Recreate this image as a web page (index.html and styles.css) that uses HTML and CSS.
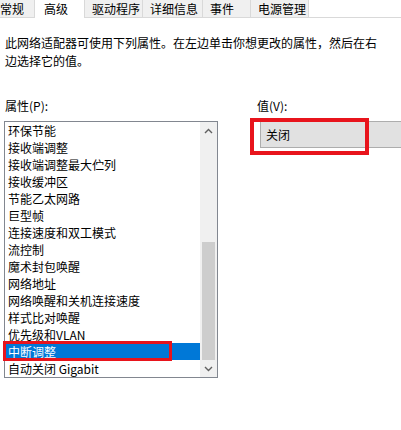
FILE: index.html
```html
<!DOCTYPE html>
<html lang="zh-CN">
<head>
  <meta charset="UTF-8">
  <meta name="viewport" content="width=device-width, initial-scale=1.0">
  <title>高级</title>
  <link rel="stylesheet" href="styles.css">
</head>
<body>
  <!-- Tab strip -->
  <div class="tabs">
    <div class="tab first">常规</div>
    <div class="tab active">高级</div>
    <div class="tab w58">驱动程序</div>
    <div class="tab w60">详细信息</div>
    <div class="tab w48">事件</div>
    <div class="tab w58">电源管理</div>
  </div>

  <main class="page">
    <p class="intro">此网络适配器可使用下列属性。在左边单击你想更改的属性，然后在右边选择它的值。</p>

    <div class="props">
      <div class="prop-col">
        <label class="caption">属性(P):</label>
        <div class="listbox">
          <ul class="items">
            <li>环保节能</li>
            <li>接收端调整</li>
            <li>接收端调整最大伫列</li>
            <li>接收缓冲区</li>
            <li>节能乙太网路</li>
            <li>巨型帧</li>
            <li>连接速度和双工模式</li>
            <li>流控制</li>
            <li>魔术封包唤醒</li>
            <li>网络地址</li>
            <li>网络唤醒和关机连接速度</li>
            <li>样式比对唤醒</li>
            <li>优先级和VLAN</li>
            <li class="selected">中断调整<span class="mark mark-item"></span></li>
            <li>自动关闭 Gigabit</li>
          </ul>
          <div class="scrollbar">
            <div class="sb-btn">
              <svg width="9" height="6" viewBox="0 0 9 6"><path d="M1 5 L4.5 1.5 L8 5" fill="none" stroke="#606060" stroke-width="1.4"/></svg>
            </div>
            <div class="sb-track"><div class="sb-thumb"></div></div>
            <div class="sb-btn">
              <svg width="9" height="6" viewBox="0 0 9 6"><path d="M1 1 L4.5 4.5 L8 1" fill="none" stroke="#606060" stroke-width="1.4"/></svg>
            </div>
          </div>
        </div>
      </div>

      <div class="value-col">
        <label class="caption">值(V):</label>
        <div class="value-box">关闭<span class="mark mark-value"></span></div>
      </div>
    </div>
  </main>
</body>
</html>
```

FILE: styles.css
```css
/* Reset */
* {
  margin: 0;
  padding: 0;
  box-sizing: border-box;
}

html, body {
  width: 401px;
  height: 430px;
  overflow: hidden;
}

body {
  background-color: #fff;
  color: #000;
  font-family: "Noto Sans CJK SC", "Microsoft YaHei", sans-serif;
  font-size: 12px;
}

/* Tabs */
.tabs {
  display: flex;
  align-items: flex-start;
  height: 18px;
  border-bottom: 1px solid #d9d9d9;
}

.tab {
  height: 17px;
  line-height: 17px;
  padding-left: 7px;
  background-color: #f0f0f0;
  border-right: 1px solid #d9d9d9;
  white-space: nowrap;
}

.tab.first {
  width: 52px;
  margin-left: -17px;
  padding-left: 17px;
}

.tab.active {
  width: 51px;
  height: 18px;
  line-height: 17px;
  padding-left: 9px;
  background-color: #fff;
  border-left: 1px solid #d9d9d9;
  margin-left: -1px;
}

.w48 { width: 48px; }
.w58 { width: 58px; }
.w60 { width: 60px; }

/* Page */
.intro {
  width: 378px;
  margin: 16px 0 0 5px;
  line-height: 18px;
}

.props {
  display: flex;
  margin-top: 27px;
}

.caption {
  display: block;
  line-height: 18px;
  margin-bottom: 6px;
}

.prop-col {
  width: 214px;
  margin-left: 4px;
}

.prop-col .caption {
  padding-left: 1px;
}

.listbox {
  display: flex;
  height: 257px;
  border: 1px solid #828790;
}

.items {
  flex: 1;
  list-style: none;
}

.items li {
  position: relative;
  height: 17px;
  line-height: 17px;
  padding-left: 3px;
  white-space: nowrap;
}

.items li.selected {
  background-color: #0078d7;
  color: #fff;
}

/* Scrollbar */
.scrollbar {
  display: flex;
  flex-direction: column;
  width: 17px;
  background-color: #f0f0f0;
}

.sb-btn {
  display: flex;
  align-items: center;
  justify-content: center;
  height: 17px;
}

.sb-track {
  flex: 1;
  display: flex;
  flex-direction: column;
  justify-content: flex-end;
}

.sb-thumb {
  height: 118px;
  margin: 0 2px;
  background-color: #cdcdcd;
}

/* Value */
.value-col {
  flex: 1;
  margin-left: 39px;
}

.value-box {
  position: relative;
  height: 27px;
  margin: 4px 0 0 3px;
  padding-left: 5px;
  line-height: 25px;
  background-color: #e1e1e1;
  border: 1px solid #adadad;
  border-right: none;
}

/* Red highlight frames */
.mark {
  position: absolute;
  border: 3px solid #e8141c;
}

.mark-item {
  left: -2px;
  top: -2px;
  width: 169px;
  height: 20px;
}

.mark-value {
  left: -11px;
  top: -4px;
  width: 119px;
  height: 37px;
  border-width: 4px;
}
```
